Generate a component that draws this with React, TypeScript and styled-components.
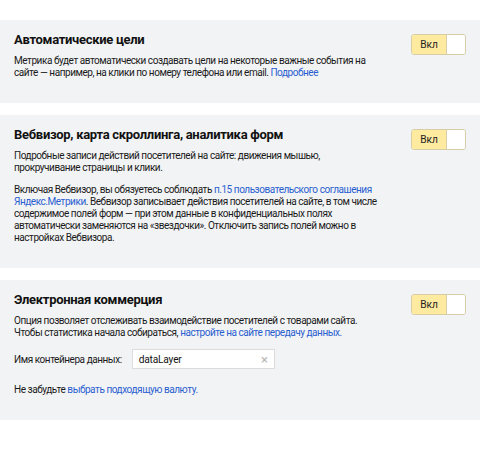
import React from "react";
import styled, { createGlobalStyle } from "styled-components";

const Global = createGlobalStyle`
  html, body { margin: 0; padding: 0; background: #fff; }
  body { font-family: Roboto, "Liberation Sans", Arial, sans-serif; color: #000; }
`;

const Page = styled.div`
  display: flex;
  flex-direction: column;
  gap: 12px;
  padding-top: 20px;
`;

const Panel = styled.section`
  background: #f2f3f5;
  padding: 11px 14px 24px 14px;
  display: flex;
  align-items: flex-start;
  justify-content: space-between;
`;

const Content = styled.div`
  min-width: 0;
`;

const Title = styled.h2`
  margin: 0 0 6px 0;
  font-size: 13px;
  letter-spacing: -0.3px;
  line-height: 18px;
  font-weight: 700;
  color: #111;
  white-space: nowrap;
`;

const Text = styled.p<{ $gap?: number }>`
  margin: ${(p) => p.$gap ?? 0}px 0 0 0;
  font-size: 10px;
  letter-spacing: -0.45px;
  line-height: 12px;
  color: #1a1a1a;
  white-space: nowrap;
`;

const Link = styled.a`
  color: #2a5fd0;
  text-decoration: none;
`;

const Toggle = styled.div`
  flex: none;
  display: flex;
  width: 55px;
  height: 21px;
  box-sizing: border-box;
  border: 1px solid #d8cda6;
  border-radius: 3px;
  overflow: hidden;
  margin-top: 3px;
`;

const ToggleLabel = styled.span`
  flex: 1;
  background: #ffeba0;
  display: flex;
  align-items: center;
  justify-content: center;
  font-size: 10.2px;
  color: #222;
  border-right: 1px solid #d8cda6;
`;

const ToggleKnob = styled.span`
  width: 18px;
  background: #fff;
`;

const FieldRow = styled.div`
  display: flex;
  align-items: center;
  gap: 10px;
  margin-top: 10px;
`;

const FieldLabel = styled.span`
  font-size: 10px;
  letter-spacing: -0.45px;
  color: #1a1a1a;
`;

const InputBox = styled.div`
  width: 143px;
  height: 20px;
  box-sizing: border-box;
  border: 1px solid #dcdcdc;
  background: #fff;
  display: flex;
  align-items: center;
  padding: 0 6px 0 6px;
  font-size: 10.2px;
  letter-spacing: -0.2px;
  color: #111;
`;

const InputText = styled.span`
  flex: 1;
`;

const Clear = styled.span`
  color: #b5b5b5;
  font-size: 13px;
  line-height: 1;
`;

const Sw = () => (
  <Toggle>
    <ToggleLabel>Вкл</ToggleLabel>
    <ToggleKnob />
  </Toggle>
);

export default function App() {
  return (
    <>
      <Global />
      <Page>
        <Panel>
          <Content>
            <Title>Автоматические цели</Title>
            <Text>
              Метрика будет автоматически создавать цели на некоторые важные события на
              <br />
              сайте — например, на клики по номеру телефона или email.{" "}
              <Link href="#">Подробнее</Link>
            </Text>
          </Content>
          <Sw />
        </Panel>
        <Panel>
          <Content>
            <Title>Вебвизор, карта скроллинга, аналитика форм</Title>
            <Text>
              Подробные записи действий посетителей на сайте: движения мышью,
              <br />
              прокручивание страницы и клики.
            </Text>
            <Text $gap={10}>
              Включая Вебвизор, вы обязуетесь соблюдать{" "}
              <Link href="#">
                п.15 пользовательского соглашения
                <br />
                Яндекс.Метрики
              </Link>
              . Вебвизор записывает действия посетителей на сайте, в том числе
              <br />
              содержимое полей форм — при этом данные в конфиденциальных полях
              <br />
              автоматически заменяются на «звездочки». Отключить запись полей можно в
              <br />
              настройках Вебвизора.
            </Text>
          </Content>
          <Sw />
        </Panel>
        <Panel>
          <Content>
            <Title>Электронная коммерция</Title>
            <Text>
              Опция позволяет отслеживать взаимодействие посетителей с товарами сайта.
              <br />
              Чтобы статистика начала собираться,{" "}
              <Link href="#">настройте на сайте передачу данных.</Link>
            </Text>
            <FieldRow>
              <FieldLabel>Имя контейнера данных:</FieldLabel>
              <InputBox>
                <InputText>dataLayer</InputText>
                <Clear>×</Clear>
              </InputBox>
            </FieldRow>
            <Text $gap={15}>
              Не забудьте <Link href="#">выбрать подходящую валюту.</Link>
            </Text>
          </Content>
          <Sw />
        </Panel>
      </Page>
    </>
  );
}
